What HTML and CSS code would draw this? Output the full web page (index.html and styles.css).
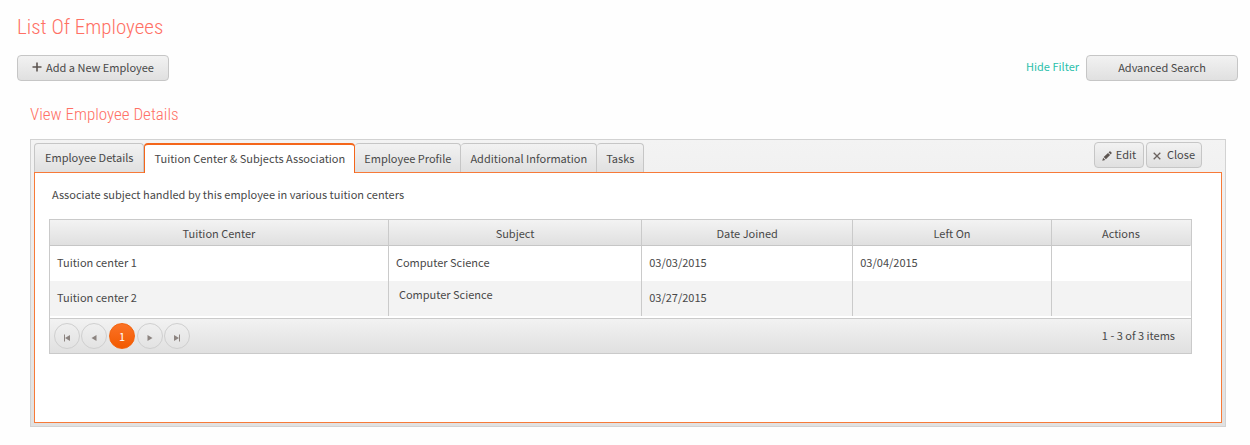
FILE: index.html
```html
<!DOCTYPE html>
<html lang="en">
<head>
<meta charset="utf-8">
<title>List Of Employees</title>
<link rel="stylesheet" href="styles.css">
</head>
<body>
<main class="page">
  <h1 class="title">List Of Employees</h1>
  <div class="toolbar">
    <button class="btn btn-wide" type="button">
      <svg class="icon" width="10" height="10" viewBox="0 0 10 10" aria-hidden="true"><path d="M5 0.5v9M0.5 5h9" stroke="#5c5450" stroke-width="1.6" fill="none"/></svg>
      Add a New Employee
    </button>
    <div class="filters">
      <a class="link" href="#">Hide Filter</a>
      <button class="btn btn-wide" type="button">Advanced Search</button>
    </div>
  </div>

  <section class="details">
    <h2 class="subtitle">View Employee Details</h2>
    <div class="panel">
      <div class="panel-head">
        <div class="tabs" role="tablist">
          <button class="tab" type="button" role="tab">Employee Details</button>
          <button class="tab tab-active" type="button" role="tab" aria-selected="true">Tuition Center &amp; Subjects Association</button>
          <button class="tab" type="button" role="tab">Employee Profile</button>
          <button class="tab" type="button" role="tab">Additional Information</button>
          <button class="tab" type="button" role="tab">Tasks</button>
        </div>
        <div class="actions">
          <button class="btn btn-edit" type="button">
            <svg class="icon icon-low" width="10" height="10" viewBox="0 0 10 10" aria-hidden="true"><path d="M0.3 9.7L1.1 6.7L3.3 8.9ZM1.7 6.1L6 1.9L8.1 4L3.9 8.3ZM6.6 1.3L7.5 0.4Q8 0 8.5 0.5L9.5 1.5Q10 2 9.5 2.5L8.7 3.4Z" fill="#5c5450"/></svg>
            Edit
          </button>
          <button class="btn btn-close" type="button">
            <svg class="icon icon-low" width="8" height="8" viewBox="0 0 8 8" aria-hidden="true"><path d="M0.7 0.7L7.3 7.3M7.3 0.7L0.7 7.3" stroke="#6a625e" stroke-width="1.3" fill="none"/></svg>
            Close
          </button>
        </div>
      </div>
      <div class="content" role="tabpanel">
        <p class="intro">Associate subject handled by this employee in various tuition centers</p>
        <div class="grid">
          <table class="table">
            <colgroup>
              <col class="col-center"><col class="col-subject"><col class="col-joined"><col class="col-left"><col>
            </colgroup>
            <thead>
              <tr><th>Tuition Center</th><th>Subject</th><th>Date Joined</th><th>Left On</th><th>Actions</th></tr>
            </thead>
            <tbody>
              <tr><td>Tuition center 1</td><td>Computer Science</td><td>03/03/2015</td><td>03/04/2015</td><td></td></tr>
              <tr class="alt"><td>Tuition center 2</td><td class="cell-top">Computer Science</td><td>03/27/2015</td><td></td><td></td></tr>
            </tbody>
          </table>
          <div class="pager">
            <nav class="pages" aria-label="Pages">
              <button class="page-btn" type="button" aria-label="First page"><svg class="arrow" width="8" height="8" viewBox="0 0 8 8"><path d="M1.5 0.5v7" stroke="#8c8480"/><path d="M7 1v6L2 4z" fill="#8c8480"/></svg></button>
              <button class="page-btn" type="button" aria-label="Previous page"><svg class="arrow" width="8" height="8" viewBox="0 0 8 8"><path d="M6.5 1v6L1.5 4z" fill="#8c8480"/></svg></button>
              <button class="page-btn page-current" type="button" aria-current="page">1</button>
              <button class="page-btn" type="button" aria-label="Next page"><svg class="arrow" width="8" height="8" viewBox="0 0 8 8"><path d="M1.5 1v6L6.5 4z" fill="#8c8480"/></svg></button>
              <button class="page-btn" type="button" aria-label="Last page"><svg class="arrow" width="8" height="8" viewBox="0 0 8 8"><path d="M6.5 0.5v7" stroke="#8c8480"/><path d="M1 1v6L6 4z" fill="#8c8480"/></svg></button>
            </nav>
            <span class="count">1 - 3 of 3 items</span>
          </div>
        </div>
      </div>
    </div>
  </section>
</main>
</body>
</html>
```
FILE: styles.css
```css
* { box-sizing: border-box; }
body {
  margin: 0;
  background: #fefefe;
  color: #484848;
  font: 11px/16px "Noto Sans CJK SC", "Noto Sans", sans-serif;
}
button { font: inherit; color: inherit; cursor: pointer; }
.page { padding: 14px 12px 0 17px; }
.title, .subtitle {
  margin: 0;
  color: #ff7065;
  font-family: "Liberation Sans Narrow", "Roboto Condensed", "Liberation Sans", sans-serif;
  font-weight: 300;
}
.title { font-size: 21px; line-height: 26px; }
.toolbar {
  display: flex;
  justify-content: space-between;
  margin-top: 15px;
}
.filters { display: flex; align-items: center; gap: 7px; }
.link { padding-bottom: 4px; color: #2bc0ab; text-decoration: none; }
.btn {
  display: flex;
  align-items: center;
  justify-content: center;
  height: 26px;
  padding: 0 0 2px;
  border: 1px solid #c6c6c6;
  border-radius: 4px;
  background: linear-gradient(#f2f2f2, #e0e0e0);
}
.icon { flex: none; }
.icon-low { margin-top: 4px; }
.btn-wide { width: 152px; gap: 4px; }
.details { padding: 22px 12px 0 13px; }
.subtitle { font-size: 17px; line-height: 22px; }
.panel {
  margin-top: 14px;
  padding: 2px 3px 3px;
  border: 1px solid #d2d2d2;
  background: linear-gradient(#f3f3f3, #e1e1e1);
}
.panel-head {
  display: flex;
  justify-content: space-between;
  align-items: flex-start;
}
.tabs { display: flex; padding-top: 1px; }
.tab {
  height: 29px;
  padding: 0 9px 1px;
  border: 1px solid #c6c6c6;
  border-bottom: 0;
  border-left-width: 0;
  border-radius: 4px 4px 0 0;
  background: linear-gradient(#f2f2f2, #e0e0e0);
}
.tab:first-child { padding: 0 10px 2px; border-left-width: 1px; }
.tab-active {
  height: 30px;
  margin-bottom: -1px;
  padding-bottom: 2px;
  position: relative;
  border: 1px solid #f4661b;
  border-top-width: 2px;
  border-bottom: 0;
  background: #fff;
}
.actions { display: flex; gap: 2px; padding-right: 20px; }
.btn-edit { width: 50px; gap: 4px; }
.btn-close { width: 56px; gap: 6px; }
.content {
  padding: 13px 29px 68px 14px;
  border: 1px solid #f77a38;
  background: #fff;
}
.intro { margin: 0 0 17px 3px; }
.grid { border: 1px solid #cacaca; }
.table {
  width: 100%;
  table-layout: fixed;
  border-collapse: separate;
  border-spacing: 0;
}
.col-center { width: 29.7%; }
.col-subject { width: 22.2%; }
.col-joined { width: 18.5%; }
.col-left { width: 17.4%; }
.table th, .table td { border-right: 1px solid #cacaca; }
.table th:last-child, .table td:last-child { border-right-color: transparent; }
.table th {
  height: 26px;
  padding: 0;
  border-bottom: 1px solid #c6c6c6;
  background: linear-gradient(#f3f3f3, #e0e0e0);
  font-weight: 400;
}
.table td { height: 35px; padding: 0 7px 3px; }
.alt { background: #f3f3f3; }
.table .cell-top { padding: 5px 10px 0; vertical-align: top; }
.pager {
  display: flex;
  align-items: center;
  justify-content: space-between;
  margin-top: 2px;
  padding: 4px 16px 4px 4px;
  border-top: 1px solid #cacaca;
  background: linear-gradient(#f2f2f2, #e0e0e0);
}
.pages { display: flex; gap: 1px; }
.page-btn {
  display: flex;
  align-items: center;
  justify-content: center;
  width: 26px;
  height: 26px;
  padding: 0;
  border: 1px solid #cfcfcf;
  border-radius: 50%;
  background: transparent;
}
.arrow { margin-top: 3px; }
.count { padding-bottom: 2px; }
.page-current {
  margin: 0 1px;
  padding-bottom: 1px;
  border-color: #f4610a;
  background: linear-gradient(#fb7226, #f25a00);
  color: #fff;
}
```
